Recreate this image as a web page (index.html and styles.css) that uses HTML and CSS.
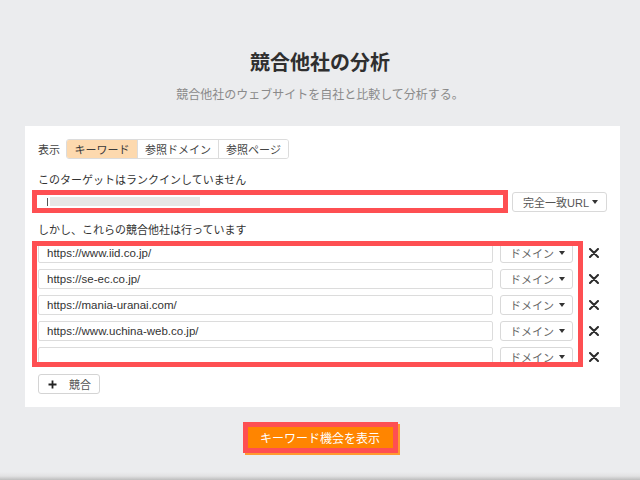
FILE: index.html
```html
<!DOCTYPE html>
<html lang="ja">
<head>
<meta charset="utf-8">
<title>競合他社の分析</title>
<link rel="stylesheet" href="styles.css">
</head>
<body>
<div class="page">
  <h1 class="title">競合他社の分析</h1>
  <p class="subtitle">競合他社のウェブサイトを自社と比較して分析する。</p>

  <div class="card">
    <div class="tabs-row">
      <span class="tabs-label">表示</span>
      <div class="tabs">
        <span class="tab active">キーワード</span>
        <span class="tab">参照ドメイン</span>
        <span class="tab">参照ページ</span>
      </div>
    </div>

    <div class="label first-label">このターゲットはランクインしていません</div>
    <div class="target-row">
      <div class="target-box">
        <span class="cursor"></span>
        <span class="blur-bar"></span>
      </div>
      <div class="select select-wide"><span>完全一致URL</span><span class="caret"></span></div>
    </div>

    <div class="label second-label">しかし、これらの競合他社は行っています</div>
    <div class="list">
      <div class="row">
        <div class="input">https://www.iid.co.jp/</div>
        <div class="select select-domain"><span>ドメイン</span><span class="caret"></span></div>
        <span class="remove"><svg width="10" height="10" viewBox="0 0 10 10"><path d="M1 1L9 9M9 1L1 9" stroke="#2b2b2b" stroke-width="2" stroke-linecap="round"/></svg></span>
      </div>
      <div class="row">
        <div class="input">https://se-ec.co.jp/</div>
        <div class="select select-domain"><span>ドメイン</span><span class="caret"></span></div>
        <span class="remove"><svg width="10" height="10" viewBox="0 0 10 10"><path d="M1 1L9 9M9 1L1 9" stroke="#2b2b2b" stroke-width="2" stroke-linecap="round"/></svg></span>
      </div>
      <div class="row">
        <div class="input">https://mania-uranai.com/</div>
        <div class="select select-domain"><span>ドメイン</span><span class="caret"></span></div>
        <span class="remove"><svg width="10" height="10" viewBox="0 0 10 10"><path d="M1 1L9 9M9 1L1 9" stroke="#2b2b2b" stroke-width="2" stroke-linecap="round"/></svg></span>
      </div>
      <div class="row">
        <div class="input">https://www.uchina-web.co.jp/</div>
        <div class="select select-domain"><span>ドメイン</span><span class="caret"></span></div>
        <span class="remove"><svg width="10" height="10" viewBox="0 0 10 10"><path d="M1 1L9 9M9 1L1 9" stroke="#2b2b2b" stroke-width="2" stroke-linecap="round"/></svg></span>
      </div>
      <div class="row">
        <div class="input"></div>
        <div class="select select-domain"><span>ドメイン</span><span class="caret"></span></div>
        <span class="remove"><svg width="10" height="10" viewBox="0 0 10 10"><path d="M1 1L9 9M9 1L1 9" stroke="#2b2b2b" stroke-width="2" stroke-linecap="round"/></svg></span>
      </div>
      <div class="annot"></div>
    </div>

    <div class="add-row">
      <span class="add-btn"><svg width="9" height="9" viewBox="0 0 9 9"><path d="M4.5 0.5V8.5M0.5 4.5H8.5" stroke="#222" stroke-width="1.8"/></svg><span>競合</span></span>
    </div>
  </div>

  <div class="cta-wrap">
    <span class="cta">キーワード機会を表示</span>
  </div>
</div>
</body>
</html>
```

FILE: styles.css
```css
* { box-sizing: border-box; }

html, body { margin: 0; padding: 0; }

body {
  width: 640px;
  height: 480px;
  overflow: hidden;
  font-family: "Liberation Sans", "Noto Sans CJK JP", sans-serif;
  color: #333;
  background: linear-gradient(to bottom, #ebecee 0, #ebecee 472px, #e2e2e3 476px, #bdbdbd 480px);
}

.page {
  display: flex;
  flex-direction: column;
  align-items: center;
  padding-top: 48px;
}

.title {
  margin: 0;
  font-size: 20px;
  line-height: 28px;
  font-weight: bold;
  color: #2f2f2f;
  font-family: "Noto Sans CJK JP", sans-serif;
}

.subtitle {
  margin: 9px 0 0;
  font-size: 12px;
  line-height: 18px;
  color: #8a8a8a;
  font-family: "Noto Sans CJK JP", sans-serif;
}

.card {
  align-self: flex-start;
  margin: 23px 0 0 25px;
  width: 595px;
  background: #fff;
  padding: 13px 13px 13px 13px;
}

.tabs-row {
  display: flex;
  align-items: center;
  height: 20px;
}

.tabs-label {
  font-size: 11px;
  color: #444;
  width: 28px;
}

.tabs {
  display: flex;
  height: 20px;
  border: 1px solid #dcdcdc;
  border-radius: 3px;
  overflow: hidden;
}

.tab {
  display: flex;
  align-items: center;
  justify-content: center;
  font-size: 11px;
  color: #444;
  border-left: 1px solid #dcdcdc;
  background: #fff;
}

.tab:nth-child(1) { width: 70px; border-left: none; }
.tab:nth-child(2) { width: 81px; }
.tab:nth-child(3) { width: 70px; }

.tab.active {
  background: #fdd9ae;
  color: #3a3a3a;
}

.label {
  font-size: 11px;
  line-height: 16px;
  color: #333;
}

.first-label { margin-top: 13px; }
.second-label { margin-top: 9px; }

.target-row {
  display: flex;
  align-items: center;
  margin-top: 2px;
  margin-left: -6px;
  height: 23px;
}

.target-box {
  position: relative;
  display: flex;
  align-items: center;
  width: 476px;
  height: 23px;
  border: 5px solid #fe4f52;
  background: #fff;
  padding-left: 10px;
}

.cursor {
  width: 1px;
  height: 8px;
  background: #555;
  margin-right: 2px;
}

.blur-bar {
  width: 150px;
  height: 9px;
  background: #e7e7e5;
}

.select {
  display: flex;
  align-items: center;
  justify-content: space-between;
  height: 20px;
  border: 1px solid #d9d9d9;
  border-radius: 3px;
  background: #fff;
  font-size: 11px;
  color: #555;
}

.select-wide {
  margin-left: 4px;
  width: 95px;
  padding: 0 8px 0 10px;
}

.select-domain {
  width: 73px;
  padding: 0 7px 0 9px;
  margin-left: 7px;
  color: #666;
}

.caret {
  width: 0;
  height: 0;
  border-left: 3.5px solid transparent;
  border-right: 3.5px solid transparent;
  border-top: 4px solid #333;
}

.list {
  position: relative;
  margin-top: 5px;
  display: flex;
  flex-direction: column;
  gap: 6px;
}

.row {
  display: flex;
  align-items: center;
  height: 20px;
}

.input {
  width: 455px;
  height: 20px;
  border: 1px solid #dcdcdc;
  border-radius: 2px;
  padding-left: 8px;
  font-size: 11.5px;
  line-height: 18px;
  color: #333;
}

.remove {
  display: flex;
  align-items: center;
  justify-content: center;
  width: 21px;
  margin-left: 10px;
}

.annot {
  position: absolute;
  left: -6px;
  top: -2px;
  bottom: 0;
  width: 551px;
  border: 5px solid #fe4f52;
  pointer-events: none;
}

.add-row {
  margin-top: 7px;
  display: flex;
}

.add-btn {
  display: flex;
  align-items: center;
  gap: 12px;
  width: 62px;
  height: 20px;
  padding-left: 9px;
  border: 1px solid #d4d4d4;
  border-radius: 3px;
  font-size: 11px;
  color: #555;
}

.cta-wrap {
  margin-top: 15px;
  display: flex;
  justify-content: center;
}

.cta {
  display: flex;
  align-items: center;
  justify-content: center;
  width: 155px;
  height: 31px;
  border: 5px solid #fe4f52;
  background: #ff8500;
  color: #fff;
  font-size: 12px;
  font-family: "Noto Sans CJK JP", sans-serif;
  box-shadow: 2px 2px 0 #ff9a30;
}
```
